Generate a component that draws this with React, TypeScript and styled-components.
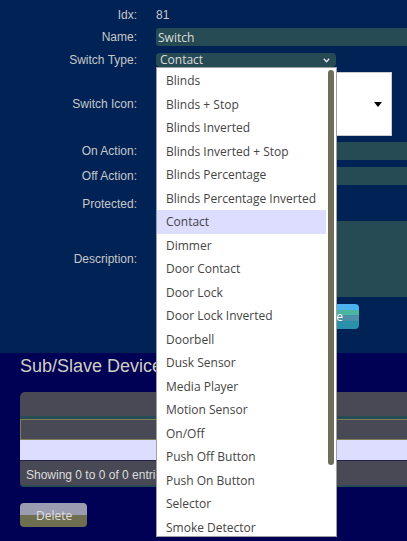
import React from "react";
import styled, { createGlobalStyle } from "styled-components";

const GlobalStyle = createGlobalStyle`
  html, body { margin: 0; padding: 0; overflow: hidden; background: #000055; }
  body { font-family: "Liberation Sans", Arial, sans-serif; }
  * { box-sizing: border-box; }
`;

const Page = styled.div`
  width: 407px;
  min-height: 541px;
  background: #000055;
  overflow: hidden;
`;

const EditPanel = styled.section`
  background: #002255;
  padding: 6px 0 24px;
`;

const Row = styled.div<{ $h: number; $gap?: number }>`
  display: grid;
  grid-template-columns: 137px 1fr;
  column-gap: 19px;
  align-items: center;
  height: ${(p) => p.$h}px;
  margin-top: ${(p) => p.$gap ?? 0}px;
`;

const Label = styled.label`
  text-align: right;
  color: #c8c8c8;
  font-size: 12px;
  line-height: 14px;
  white-space: nowrap;
`;

const Value = styled.span`
  color: #c8c8c8;
  font-size: 12px;
  line-height: 14px;
`;

const TextInput = styled.input`
  display: block;
  width: 270px;
  height: 18px;
  border: none;
  border-radius: 3px;
  background: #274b54;
  color: #dddddd;
  font-family: "Open Sans", sans-serif;
  font-size: 12px;
  padding: 0 2px;
  outline: none;
`;

const TextArea = styled.textarea`
  display: block;
  width: 270px;
  height: 76px;
  border: none;
  border-radius: 3px;
  background: #274b54;
  resize: none;
  outline: none;
`;

const SelectWrap = styled.div`
  position: relative;
  width: 180px;
  height: 14px;
`;

const SelectBox = styled.div`
  display: flex;
  align-items: center;
  justify-content: space-between;
  height: 14px;
  padding: 0 6px 0 4px;
  background: #274b54;
  border-radius: 4px;
  color: #dddddd;
  font-family: "Open Sans", sans-serif;
  font-size: 12px;
  line-height: 14px;
`;

const OptionList = styled.div`
  position: absolute;
  top: 100%;
  left: 0;
  z-index: 10;
  display: flex;
  width: 181px;
  height: 470px;
  background: #ffffff;
  border: 1px solid #a0a0a0;
`;

const Options = styled.ul`
  flex: 1;
  margin: 0;
  padding: 1px 0 0;
  list-style: none;
  overflow: hidden;
`;

const Option = styled.li<{ $selected?: boolean }>`
  height: 23.5px;
  line-height: 23.5px;
  padding-left: 9px;
  font-family: "Open Sans", sans-serif;
  font-size: 12px;
  color: #444444;
  white-space: nowrap;
  background: ${(p) => (p.$selected ? "#ddddff" : "transparent")};
`;

const ScrollTrack = styled.div`
  width: 10px;
  padding: 2px;
  background: #ffffff;
`;

const ScrollThumb = styled.div`
  height: 395px;
  border-radius: 3px;
  background: #6f6d55;
`;

const IconPicker = styled.div`
  display: flex;
  align-items: center;
  justify-content: flex-end;
  width: 236px;
  height: 64px;
  padding: 0 9px 0 8px;
  background: #ffffff;
  border: 1px solid #cccccc;
`;

const Caret = styled.span`
  width: 0;
  height: 0;
  border-left: 4px solid transparent;
  border-right: 4px solid transparent;
  border-top: 5px solid #000000;
`;

const Checkbox = styled.input`
  margin: 0;
  width: 13px;
  height: 13px;
`;

const ButtonBar = styled.div`
  display: flex;
  justify-content: flex-end;
  width: 203px;
`;

const Button = styled.button<{ $kind: "update" | "delete" }>`
  height: ${(p) => (p.$kind === "update" ? 25 : 24)}px;
  width: ${(p) => (p.$kind === "update" ? "auto" : "67px")};
  padding: 0 16px;
  border: none;
  border-radius: 4px;
  font-family: "Open Sans", sans-serif;
  font-size: 12px;
  color: ${(p) => (p.$kind === "update" ? "#ffffff" : "#e0e0e0")};
  background: ${(p) =>
    p.$kind === "update"
      ? "linear-gradient(to bottom, #4db3ee 0 24%, #4ab6a2 24% 44%, #4b90a8 44% 68%, #2a91ad 68% 100%)"
      : "linear-gradient(to bottom, #9c9cb0 0 50%, #6f6e50 50% 100%)"};
`;

const SubSection = styled.section`
  padding: 3px 0 0 20px;
`;

const Heading = styled.h2`
  margin: 0;
  font-family: "Liberation Sans", Arial, sans-serif;
  font-size: 18px;
  line-height: 20px;
  font-weight: normal;
  color: #d0d0c0;
  white-space: nowrap;
`;

const DataTable = styled.div`
  width: 400px;
  margin: 16px 0 16px;
`;

const TableTop = styled.div`
  height: 27px;
  background: #494955;
  border-top-left-radius: 5px;
  border-bottom: 3px solid #274b54;
`;

const HeaderRow = styled.div`
  height: 21px;
  background: #494955;
  border: 1px solid #7f7f55;
`;

const EmptyRow = styled.div`
  height: 21px;
  background: #ddddff;
  border-bottom: 1px solid #22224a;
`;

const TableFooter = styled.div`
  height: 26px;
  padding: 7px 6px 0;
  background: #494955;
  border-bottom: 2px solid #274b54;
  border-bottom-left-radius: 4px;
  font-size: 12px;
  line-height: 14px;
  color: #dddddd;
  white-space: nowrap;
`;

const Chevron = () => (
  <svg width="7" height="5" viewBox="0 0 7 5">
    <path d="M0.8 0.8 L3.5 3.8 L6.2 0.8" fill="none" stroke="#e8e8ff" strokeWidth="1.3" />
  </svg>
);

const switchTypes = [
  "Blinds",
  "Blinds + Stop",
  "Blinds Inverted",
  "Blinds Inverted + Stop",
  "Blinds Percentage",
  "Blinds Percentage Inverted",
  "Contact",
  "Dimmer",
  "Door Contact",
  "Door Lock",
  "Door Lock Inverted",
  "Doorbell",
  "Dusk Sensor",
  "Media Player",
  "Motion Sensor",
  "On/Off",
  "Push Off Button",
  "Push On Button",
  "Selector",
  "Smoke Detector",
];

export default function App() {
  const selected = "Contact";
  return (
    <>
      <GlobalStyle />
      <Page>
        <EditPanel>
          <Row $h={18}>
            <Label>Idx:</Label>
            <Value>81</Value>
          </Row>
          <Row $h={18} $gap={4}>
            <Label>Name:</Label>
            <TextInput defaultValue="Switch" />
          </Row>
          <Row $h={14} $gap={7}>
            <Label>Switch Type:</Label>
            <SelectWrap>
              <SelectBox>
                <span>{selected}</span>
                <Chevron />
              </SelectBox>
              <OptionList>
                <Options>
                  {switchTypes.map((t) => (
                    <Option key={t} $selected={t === selected}>
                      {t}
                    </Option>
                  ))}
                </Options>
                <ScrollTrack>
                  <ScrollThumb />
                </ScrollTrack>
              </OptionList>
            </SelectWrap>
          </Row>
          <Row $h={64} $gap={5}>
            <Label>Switch Icon:</Label>
            <IconPicker>
              <Caret />
            </IconPicker>
          </Row>
          <Row $h={18} $gap={6}>
            <Label>On Action:</Label>
            <TextInput />
          </Row>
          <Row $h={18} $gap={7}>
            <Label>Off Action:</Label>
            <TextInput />
          </Row>
          <Row $h={18} $gap={10}>
            <Label>Protected:</Label>
            <Checkbox type="checkbox" />
          </Row>
          <Row $h={76} $gap={8}>
            <Label>Description:</Label>
            <TextArea />
          </Row>
          <Row $h={25} $gap={7}>
            <span />
            <ButtonBar>
              <Button $kind="update">Update</Button>
            </ButtonBar>
          </Row>
        </EditPanel>
        <SubSection>
          <Heading>Sub/Slave Devices</Heading>
          <DataTable>
            <TableTop />
            <HeaderRow />
            <EmptyRow />
            <TableFooter>Showing 0 to 0 of 0 entries</TableFooter>
          </DataTable>
          <Button $kind="delete">Delete</Button>
        </SubSection>
      </Page>
    </>
  );
}
